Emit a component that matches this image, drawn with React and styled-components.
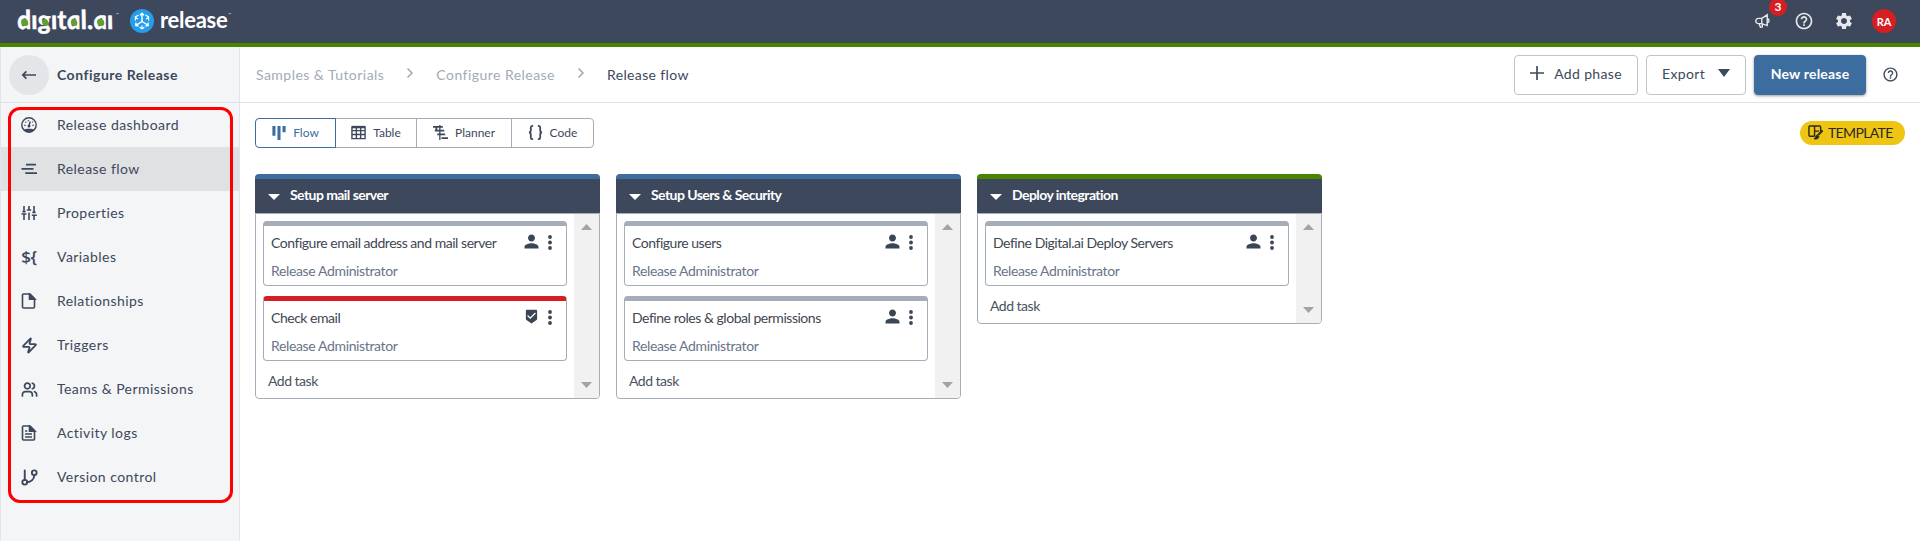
import React from "react";
import styled, { createGlobalStyle, css } from "styled-components";
import { Zap, Users, GitBranch, ChevronRight } from "lucide-react";
import { MdHelpOutline, MdSettings, MdPerson, MdBeenhere } from "react-icons/md";

const navy = "#3d485c";
const blue = "#3d6c9e";
const grey = "#a5adb8";

const Global = createGlobalStyle`
  * { box-sizing: border-box; }
  body { margin: 0; background: #fff; font-family: Lato, "Liberation Sans", sans-serif; font-size: 14px; color: ${navy}; overflow: hidden; }
  svg { display: block; flex: none; }
`;

const Page = styled.div`
  height: 541px;
  display: flex;
  flex-direction: column;
`;

const TopBar = styled.header`
  height: 47px;
  flex: none;
  display: flex;
  align-items: center;
  justify-content: space-between;
  padding: 0 24px 5px 18px;
  background: ${navy};
  border-bottom: 4px solid #498500;
`;

const Brand = styled.div`
  display: flex;
  align-items: center;
  height: 38px;
`;

const Wordmark = styled.div`
  width: 97px;
  height: 38px;
  font: italic 700 26px/38px Lato, sans-serif;
  letter-spacing: 0.15px;
  color: #fff;
  white-space: nowrap;
`;

const Letters = styled.span`
  display: inline-block;
  transform: skewX(8deg);
  transform-origin: 0 28px;
  -webkit-text-stroke: 0.5px #fff;
`;

const DotlessI = styled.span`
  display: inline-block;
  clip-path: inset(14px -2px 0 -2px);
`;

const Bowl = styled.span`
  position: relative;
  &::after {
    content: "";
    position: absolute;
    left: 4px;
    bottom: 9.5px;
    width: 6.5px;
    height: 6.5px;
    border-radius: 50%;
    background: #5da130;
  }
`;

const Trademark = styled.span`
  align-self: flex-start;
  margin: 12px 0 0 1px;
  width: 2px;
  font-size: 4px;
  line-height: 5px;
  color: #dfe2e7;
`;

const ProductMark = styled.div`
  width: 24px;
  height: 24px;
  margin: 4px 6px 0 12px;
`;

const ProductName = styled.span`
  font-size: 22px;
  font-weight: 700;
  line-height: 38px;
  letter-spacing: -0.3px;
  padding-top: 1px;
  color: #fff;
`;

const TopActions = styled.div`
  display: flex;
  align-items: center;
  height: 38px;
  padding-top: 4px;
  color: #e6e8eb;
`;

const Announcements = styled.div`
  position: relative;
  width: 16px;
  margin-right: 23px;
`;

const CountBadge = styled.span`
  position: absolute;
  left: 14px;
  top: -15px;
  width: 18px;
  height: 18px;
  border-radius: 50%;
  background: #d61f23;
  color: #fff;
  font: 700 12px/18px Lato, sans-serif;
  text-align: center;
`;

const SettingsSlot = styled.div`
  margin: 0 18px 0 20px;
`;

const Avatar = styled.div`
  width: 24px;
  height: 24px;
  border-radius: 50%;
  background: #d61f23;
  color: #fff;
  font: 700 11px/25px Lato, sans-serif;
  text-align: center;
`;

const Body = styled.div`
  flex: 1;
  display: flex;
`;

const Sidebar = styled.aside`
  width: 240px;
  flex: none;
  background: #f3f5f6;
  border: solid #e3e5e8;
  border-width: 0 1px;
`;

const SidebarHead = styled.div`
  height: 56px;
  display: flex;
  align-items: center;
  padding-left: 8px;
  border-bottom: 1px solid #e0e1e4;
  font-weight: 700;
  letter-spacing: 0.5px;
`;

const BackButton = styled.div`
  width: 40px;
  height: 40px;
  margin-right: 8px;
  border-radius: 50%;
  background: #e3e5e8;
  display: flex;
  align-items: center;
  justify-content: center;
`;

const Nav = styled.nav`
  position: relative;
`;

const NavItem = styled.div`
  height: 44px;
  display: flex;
  align-items: center;
  padding: 0 0 2px 20px;
  letter-spacing: 0.44px;
  background: ${(p) => (p.$active ? "#e0e1e2" : "transparent")};
`;

const NavIcon = styled.span`
  width: 16px;
  margin: 2px 20px 0 0;
  display: flex;
  justify-content: center;
`;

const VariableGlyph = styled.span`
  font: 600 17px/18px "Open Sans", sans-serif;
  letter-spacing: -0.4px;
`;

const NavOutline = styled.div`
  position: absolute;
  left: 7px;
  top: 4px;
  width: 225px;
  height: 396px;
  border: 3px solid #f00;
  border-radius: 12px;
`;

const Main = styled.main`
  flex: 1;
  display: flex;
  flex-direction: column;
`;

const PageHead = styled.div`
  height: 56px;
  display: flex;
  align-items: center;
  justify-content: space-between;
  padding: 0 21px 0 16px;
  border-bottom: 1px solid #dfe1e4;
`;

const Breadcrumbs = styled.div`
  display: flex;
  align-items: center;
  letter-spacing: 0.46px;
  color: #a3abb6;
`;

const Crumb = styled.span`
  ${(p) => p.$current && css`color: ${navy}; letter-spacing: 0.37px;`}
`;

const CrumbArrow = styled.span`
  width: 52px;
  display: flex;
  justify-content: center;
  padding-bottom: 3px;
`;

const Actions = styled.div`
  display: flex;
  align-items: center;
  gap: 8px;
`;

const Button = styled.button`
  width: ${(p) => p.$w}px;
  height: 40px;
  padding: 0 15px 3px;
  display: flex;
  align-items: center;
  justify-content: ${(p) => (p.$primary ? "center" : "space-between")};
  border: 1px solid ${(p) => (p.$primary ? blue : "#c1c3c7")};
  border-radius: 4px;
  background: ${(p) => (p.$primary ? blue : "#fff")};
  box-shadow: ${(p) => (p.$primary ? "0 1px 3px rgba(0,0,0,.4)" : "none")};
  color: ${(p) => (p.$primary ? "#fff" : navy)};
  font: ${(p) => (p.$primary ? 700 : 400)} 14px Lato, sans-serif;
  letter-spacing: ${(p) => (p.$primary ? 0.2 : 0.35)}px;
`;

const HelpSlot = styled.div`
  margin-left: 8px;
`;

const ViewBar = styled.div`
  height: 71px;
  display: flex;
  justify-content: space-between;
  align-items: flex-start;
  padding: 15px 15px 0;
`;

const Segments = styled.div`
  display: flex;
`;

const Segment = styled.div`
  width: ${(p) => p.$w}px;
  height: 30px;
  margin-left: -1px;
  padding-bottom: 1px;
  display: flex;
  align-items: center;
  justify-content: center;
  gap: 7px;
  border: 1px solid ${grey};
  font-size: 12px;
  &:first-child { margin-left: 0; border-radius: 4px 0 0 4px; }
  &:last-child { border-radius: 0 4px 4px 0; }
  ${(p) => p.$active && css`color: ${blue}; border-color: ${blue}; z-index: 1;`}
`;

const TemplateTag = styled.div`
  width: 105px;
  height: 24px;
  margin-top: 3px;
  padding: 0 0 1px 8px;
  display: flex;
  align-items: center;
  gap: 5px;
  border-radius: 12px;
  background: #eec512;
  color: #2c2a20;
  letter-spacing: -0.65px;
`;

const Board = styled.div`
  display: flex;
  align-items: flex-start;
  gap: 16px;
  padding-left: 15px;
`;

const Phase = styled.section`
  width: 345px;
`;

const PhaseHead = styled.div`
  height: 39px;
  display: flex;
  align-items: center;
  padding: 0 13px 3px;
  gap: 10px;
  background: ${navy};
  border-top: 5px solid ${(p) => p.$color};
  border-radius: 4px 4px 0 0;
  color: #fff;
  font-weight: 700;
  letter-spacing: -0.56px;
`;

const PhaseCaret = styled.span`
  margin-top: 5px;
`;

const PhaseBody = styled.div`
  display: flex;
  border: 1px solid ${grey};
  border-radius: 0 0 4px 4px;
  overflow: hidden;
`;

const Tasks = styled.div`
  flex: 1;
  padding: 7px 7px 0;
`;

const Scrollbar = styled.div`
  width: 25px;
  background: #f1f1f1;
  color: #a3a3a3;
  display: flex;
  flex-direction: column;
  justify-content: space-between;
  align-items: center;
  padding: 10px 0;
`;

const Card = styled.article`
  height: 65px;
  margin-bottom: 10px;
  border: 1px solid ${grey};
  border-top: 5px solid ${(p) => (p.$alert ? "#d61f23" : grey)};
  border-radius: 4px;
  padding: 4px 14px 0 7px;
`;

const CardRow = styled.div`
  height: 24px;
  display: flex;
  align-items: center;
  letter-spacing: -0.47px;
  color: #3f4752;
`;

const CardTitle = styled.span`
  flex: 1;
`;

const CardIcon = styled.span`
  width: 20px;
  display: flex;
  justify-content: center;
  margin: -1px 7px 0 0;
  color: #3b4654;
`;

const Owner = styled.div`
  line-height: 22px;
  margin-top: 6px;
  letter-spacing: -0.36px;
  color: #69748a;
`;

const AddTask = styled.div`
  height: 27px;
  padding-left: 5px;
  line-height: 19px;
  letter-spacing: -0.5px;
  color: #4a5362;
`;

const Svg = ({ s = 16, children }) => (
  <svg width={s} height={s} viewBox="0 0 16 16" fill="none" stroke="currentColor" strokeWidth="1.6">{children}</svg>
);

const Triangle = ({ w, h, up }) => (
  <svg width={w} height={h} viewBox="0 0 10 10" preserveAspectRatio="none" fill="currentColor">
    <path d={up ? "M0 10L5 0L10 10Z" : "M0 0H10L5 10Z"} />
  </svg>
);

const GaugeIcon = () => (
  <Svg>
    <circle cx="8" cy="8" r="7.2" strokeWidth="1.4" />
    <path d="M2.4 12.4C5 11.4 11 11.4 13.6 12.4C12.2 14.4 10.2 15.2 8 15.2S3.8 14.4 2.4 12.4Z" fill="currentColor" stroke="none" />
    <path d="M8 9L9.2 4.5" strokeWidth="1.4" />
    <circle cx="8" cy="9" r="1.5" fill="currentColor" stroke="none" />
    <path d="M3.2 8.4H4.6M11.4 8.4H12.8M4.4 4.7L5.3 5.6M11.8 4.7L11.1 5.5M7.3 3V4.2" strokeWidth="1.1" />
  </Svg>
);
const FlowLinesIcon = () => <Svg><path d="M5 3.7H15M0.5 7.9H12.5M4.3 12.2H16" strokeWidth="1.8" /></Svg>;
const SlidersIcon = () => (
  <Svg><path d="M3 1V7M0.5 9H5.5M3 9V15M8 1V5M5.8 5H10.2M8 7.5V15M13 1V8M10.8 10.2H15.8M13 10V15M1.4 6.6H4.6M11.4 7.4H14.6" strokeWidth="1.6" /></Svg>
);
const FileIcon = ({ lines }) => (
  <Svg>
    <path d="M2.5 1H9L13.5 5.5V14A1 1 0 0 1 12.5 15H2.5A1 1 0 0 1 1.5 14V2A1 1 0 0 1 2.5 1Z" />
    <path d="M8.5 1V6.3H13.9Z" fill="currentColor" />
    {lines && <path d="M4.1 6H6.3M4.1 9H11M4.1 12H11" />}
  </Svg>
);
const BackIcon = () => <Svg><path d="M15 8H2M5.4 4.4L1.8 8L5.4 11.6" strokeWidth="1.7" /></Svg>;
const PlusIcon = () => <Svg s={14}><path d="M8 0V16M0 8H16" strokeWidth="1.9" /></Svg>;
const KanbanIcon = () => <Svg s={14}><path d="M2.2 0V11M8 0V16M13.8 0V7" strokeWidth="3.5" /></Svg>;
const TableIcon = () => (
  <Svg s={15}><path d="M1 2H15V14.5H1ZM5.7 2V14.5M10.3 2V14.5M1 6H15M1 10.2H15" strokeWidth="1.5" /><path d="M1 2.2H15" strokeWidth="2.6" /></Svg>
);
const PlannerIcon = () => (
  <Svg s={15}><path d="M7.3 0V16" strokeWidth="1.4" /><path d="M0 2H10.5M2 6H7M7 6H12M4.5 10H13M9 14H16M3.6 2V6" strokeWidth="2" /></Svg>
);
const BracesIcon = () => (
  <Svg s={15}><path d="M5.5 1H4.4Q3 1 3 2.8V5.6Q3 8 1 8Q3 8 3 10.4V13.2Q3 15 4.4 15H5.5M10.5 1H11.6Q13 1 13 2.8V5.6Q13 8 15 8Q13 8 13 10.4V13.2Q13 15 11.6 15H10.5" strokeWidth="1.9" /></Svg>
);
const MegaphoneIcon = () => (
  <Svg><path d="M12.2 1.8V12.6L6.8 10.6H3.4A2.6 2.6 0 0 1 3.4 5.4H6.8ZM6.8 5.4V10.6M4.2 10.8L5.4 14.3L7.3 14V11M12.4 5.8C14.6 6.2 14.6 9.2 12.4 9.8" strokeWidth="1.4" /></Svg>
);
const TemplateIcon = () => (
  <Svg s={15}><path d="M13.5 6.5V2A1 1 0 0 0 12.5 1H2A1 1 0 0 0 1 2V11A1 1 0 0 0 2 12H7M7 1V12M7 6.5H12" strokeWidth="1.5" /><path d="M15.6 5.8L10.5 11" strokeWidth="2.2" /><path d="M9.8 10.6C7.6 11 8.8 13.2 6.5 14.8C9 15.6 12 14.4 11.6 12" fill="currentColor" strokeWidth="1" /></Svg>
);
const DotsIcon = () => (
  <svg width="4" height="15" viewBox="0 0 4 15" fill="#3b4654"><circle cx="2" cy="2" r="1.9" /><circle cx="2" cy="7.5" r="1.9" /><circle cx="2" cy="13" r="1.9" /></svg>
);
const ReleaseLogo = () => (
  <svg width="24" height="24" viewBox="0 0 24 24" fill="none" stroke="#fff" strokeWidth="1.4">
    <circle cx="12" cy="12" r="12" fill="#259ded" stroke="none" />
    <path d="M12 4.5V12.5L6.4 16M12 12.5L17.6 16M10 6.2L12 4.2L14 6.2M6 13.6L5.8 16.4L8.6 17M18 13.6L18.2 16.4L15.4 17" />
    <path d="M8.6 6L5.4 7.9V11.4M15.4 6L18.6 7.9V11.4M9.6 18.3L12 19.7L14.4 18.3M5.4 8.5L8 10M18.6 8.5L16 10M12 19V16.5" strokeWidth="1.2" />
  </svg>
);

const navItems = [
  ["Release dashboard", <GaugeIcon />],
  ["Release flow", <FlowLinesIcon />],
  ["Properties", <SlidersIcon />],
  ["Variables", <VariableGlyph>{"${"}</VariableGlyph>],
  ["Relationships", <FileIcon />],
  ["Triggers", <Zap size={17} strokeWidth={2.5} />],
  ["Teams & Permissions", <Users size={17} strokeWidth={2.4} />],
  ["Activity logs", <FileIcon lines />],
  ["Version control", <GitBranch size={19} strokeWidth={2.4} />],
];

const phases = [
  { name: "Setup mail server", color: blue, tasks: [["Configure email address and mail server"], ["Check email", true]] },
  { name: "Setup Users & Security", color: blue, tasks: [["Configure users"], ["Define roles & global permissions"]] },
  { name: "Deploy integration", color: "#498500", tasks: [["Define Digital.ai Deploy Servers"]] },
];

function Task({ title, gate }) {
  return (
    <Card $alert={gate}>
      <CardRow>
        <CardTitle>{title}</CardTitle>
        <CardIcon>{gate ? <MdBeenhere size={15} /> : <MdPerson size={21} />}</CardIcon>
        <DotsIcon />
      </CardRow>
      <Owner>Release Administrator</Owner>
    </Card>
  );
}

export default function App() {
  return (
    <Page>
      <Global />
      <TopBar>
        <Brand>
          <Wordmark>
            <Letters><Bowl>d</Bowl><DotlessI>i</DotlessI><Bowl>g</Bowl><DotlessI>i</DotlessI>t<Bowl>a</Bowl>l.<Bowl>a</Bowl><DotlessI>i</DotlessI></Letters>
          </Wordmark>
          <Trademark>™</Trademark>
          <ProductMark><ReleaseLogo /></ProductMark>
          <ProductName>release</ProductName>
          <Trademark>™</Trademark>
        </Brand>
        <TopActions>
          <Announcements>
            <MegaphoneIcon />
            <CountBadge>3</CountBadge>
          </Announcements>
          <MdHelpOutline size={20} />
          <SettingsSlot><MdSettings size={20} /></SettingsSlot>
          <Avatar>RA</Avatar>
        </TopActions>
      </TopBar>
      <Body>
        <Sidebar>
          <SidebarHead>
            <BackButton><BackIcon /></BackButton>
            Configure Release
          </SidebarHead>
          <Nav>
            {navItems.map(([label, icon], i) => (
              <NavItem key={label} $active={i === 1}>
                <NavIcon>{icon}</NavIcon>
                {label}
              </NavItem>
            ))}
            <NavOutline />
          </Nav>
        </Sidebar>
        <Main>
          <PageHead>
            <Breadcrumbs>
              <Crumb>Samples & Tutorials</Crumb>
              <CrumbArrow><ChevronRight size={16} strokeWidth={2.6} /></CrumbArrow>
              <Crumb>Configure Release</Crumb>
              <CrumbArrow><ChevronRight size={16} strokeWidth={2.6} /></CrumbArrow>
              <Crumb $current>Release flow</Crumb>
            </Breadcrumbs>
            <Actions>
              <Button $w={124}><PlusIcon />Add phase</Button>
              <Button $w={100}>Export<Triangle w={12} h={8} /></Button>
              <Button $w={112} $primary>New release</Button>
              <HelpSlot><MdHelpOutline size={17} /></HelpSlot>
            </Actions>
          </PageHead>
          <ViewBar>
            <Segments>
              <Segment $w={81} $active><KanbanIcon />Flow</Segment>
              <Segment $w={82}><TableIcon />Table</Segment>
              <Segment $w={96}><PlannerIcon />Planner</Segment>
              <Segment $w={83}><BracesIcon />Code</Segment>
            </Segments>
            <TemplateTag><TemplateIcon />TEMPLATE</TemplateTag>
          </ViewBar>
          <Board>
            {phases.map((phase) => (
              <Phase key={phase.name}>
                <PhaseHead $color={phase.color}>
                  <PhaseCaret><Triangle w={12} h={6} /></PhaseCaret>
                  {phase.name}
                </PhaseHead>
                <PhaseBody>
                  <Tasks>
                    {phase.tasks.map(([title, gate]) => <Task key={title} title={title} gate={gate} />)}
                    <AddTask>Add task</AddTask>
                  </Tasks>
                  <Scrollbar>
                    <Triangle w={11} h={6} up />
                    <Triangle w={11} h={6} />
                  </Scrollbar>
                </PhaseBody>
              </Phase>
            ))}
          </Board>
        </Main>
      </Body>
    </Page>
  );
}
